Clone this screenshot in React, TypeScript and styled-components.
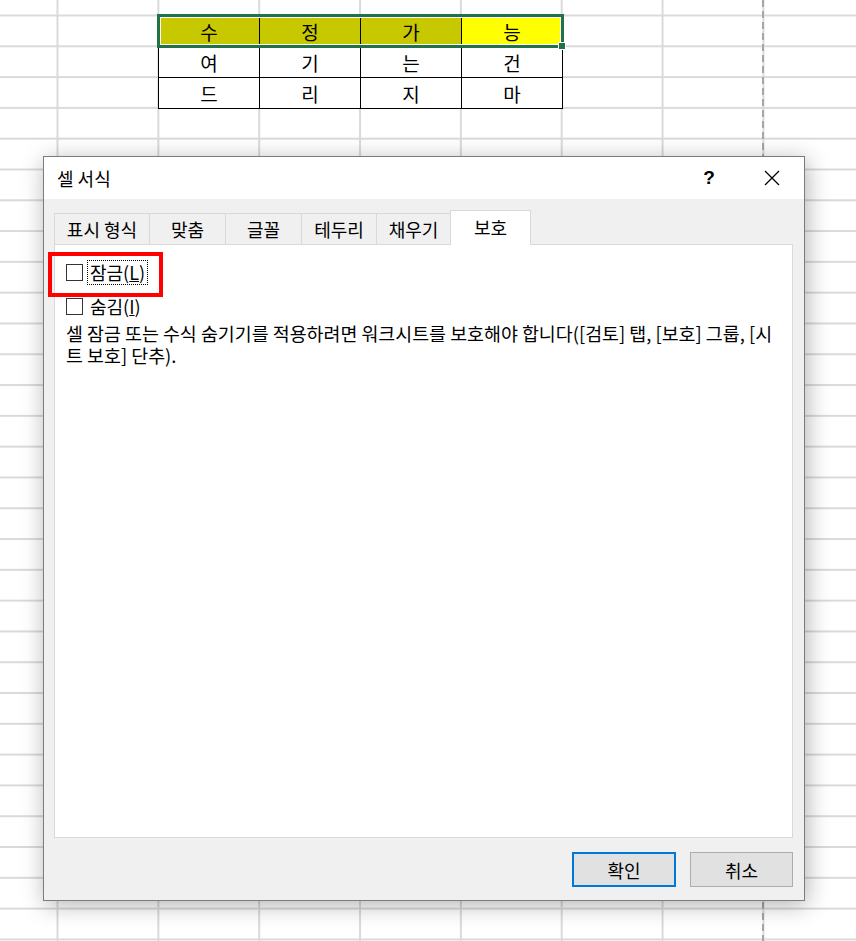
import React from 'react'
import styled, { createGlobalStyle } from 'styled-components'

const GlobalStyle = createGlobalStyle`
    html, body {
        margin: 0;
        padding: 0;
        background: #fff;
        overflow: hidden;
    }
    body {
        font-family: 'Noto Sans CJK KR', 'Noto Sans', sans-serif;
        color: #000;
    }
`

const Sheet = styled.div`
    position: relative;
    width: 856px;
    height: 941px;
    box-sizing: border-box;
    padding: 15px 0 0 158px;
    overflow: hidden;
    background-color: #fff;
    background-image:
        repeating-linear-gradient(to bottom, #a6a6a6 0 7px, transparent 7px 11px),
        linear-gradient(to right, #dadada 0 2px, transparent 2px),
        linear-gradient(to bottom, #dadada 0 2px, transparent 2px);
    background-size: 2px 100%, 100.85px 100%, 100% 30.8px;
    background-position: 762px 0, 56.5px 0, 0 14.5px;
    background-repeat: no-repeat, repeat-x, repeat-y;
`

const TableWrap = styled.div`
    position: relative;
    width: 405px;
`

const CellGrid = styled.div`
    display: grid;
    grid-template-columns: repeat(4, 100px);
    grid-auto-rows: 30px;
    gap: 1px;
    padding: 1px;
    background: #000;
`

const Cell = styled.div<{ $fill?: string }>`
    background: ${p => p.$fill || '#fff'};
    display: flex;
    align-items: center;
    justify-content: center;
    font-size: 19px;
    line-height: 1;
    padding-top: 1px;
`

const Selection = styled.div`
    position: absolute;
    left: -1px;
    top: -1px;
    width: 407px;
    height: 34px;
    box-sizing: border-box;
    border: 3px solid #217346;
    box-shadow: inset 0 0 0 1px #fff;
    pointer-events: none;
`

const Handle = styled.div`
    position: absolute;
    right: -5px;
    bottom: -5px;
    width: 6px;
    height: 6px;
    background: #217346;
    border: 1px solid #fff;
`

const Dialog = styled.div`
    position: absolute;
    left: 43px;
    top: 156px;
    width: 762px;
    height: 745px;
    box-sizing: border-box;
    border: 1px solid #7c7c7c;
    background: #f0f0f0;
    box-shadow: 2px 4px 22px rgba(0, 0, 0, 0.3);
    display: flex;
    flex-direction: column;
`

const TitleBar = styled.div`
    height: 42px;
    background: #fff;
    display: flex;
    align-items: center;
    padding-left: 13px;
`

const Title = styled.div`
    font-size: 18px;
`

const TitleButtons = styled.div`
    margin-left: auto;
    margin-right: 9px;
    display: flex;
    gap: 17px;
`

const TitleButton = styled.div`
    width: 46px;
    height: 30px;
    display: flex;
    align-items: center;
    justify-content: center;
    font-family: 'Liberation Sans', sans-serif;
    font-size: 19px;
    font-weight: bold;
`

const Body = styled.div`
    flex: 1;
    display: flex;
    flex-direction: column;
    padding: 11px 11px 13px 10px;
    min-height: 0;
`

const TabRow = styled.div`
    display: flex;
    align-items: flex-end;
    height: 34px;
    padding-left: 1px;
`

const Tab = styled.div<{ $width: number; $active?: boolean }>`
    width: ${p => p.$width}px;
    height: ${p => (p.$active ? 35 : 31)}px;
    box-sizing: border-box;
    margin-left: -1px;
    margin-bottom: ${p => (p.$active ? -1 : 0)}px;
    border: 1px solid #d9d9d9;
    border-bottom: none;
    background: ${p => (p.$active ? '#fff' : '#f0f0f0')};
    position: relative;
    z-index: ${p => (p.$active ? 1 : 0)};
    display: flex;
    align-items: center;
    justify-content: center;
    font-size: 18px;
    padding-bottom: ${p => (p.$active ? 2 : 0)}px;
`

const Panel = styled.div`
    flex: 1;
    position: relative;
    background: #fff;
    border: 1px solid #d9d9d9;
    padding: 14px 11px;
`

const CheckRow = styled.div`
    display: flex;
    align-items: center;
    height: 26px;
    margin-bottom: 8px;
`

const Box = styled.div`
    width: 17px;
    height: 17px;
    box-sizing: border-box;
    border: 1px solid #333;
    background: #fff;
    margin-right: 4px;
`

const Label = styled.span<{ $focused?: boolean }>`
    font-size: 18px;
    line-height: 23px;
    padding: 0 2px;
    border: 1px dotted ${p => (p.$focused ? '#000' : 'transparent')};
`

const Desc = styled.div`
    font-size: 18.4px;
    line-height: 22px;
    margin-top: -5px;
`

const Highlight = styled.div`
    position: absolute;
    left: -7px;
    top: 7px;
    width: 115px;
    height: 45px;
    box-sizing: border-box;
    border: 4px solid #ff0000;
`

const Footer = styled.div`
    display: flex;
    justify-content: flex-end;
    gap: 14px;
    margin-top: 14px;
`

const Button = styled.div<{ $width: number; $primary?: boolean }>`
    width: ${p => p.$width}px;
    height: 35px;
    box-sizing: border-box;
    background: #e1e1e1;
    border: ${p => (p.$primary ? '2px solid #0078d7' : '1px solid #adadad')};
    display: flex;
    align-items: center;
    justify-content: center;
    font-size: 18px;
`

const rows = [
    ['수', '정', '가', '능'],
    ['여', '기', '는', '건'],
    ['드', '리', '지', '마'],
]

const tabs = [
    { label: '표시 형식', width: 96 },
    { label: '맞춤', width: 77 },
    { label: '글꼴', width: 77 },
    { label: '테두리', width: 76 },
    { label: '채우기', width: 75 },
    { label: '보호', width: 81, active: true },
]

const fillFor = (r: number, c: number) => {
    if (r !== 0) return undefined
    return c === 3 ? '#ffff00' : '#c8c800'
}

export default function App() {
    return (
        <>
            <GlobalStyle />
            <Sheet>
                <TableWrap>
                    <CellGrid>
                        {rows.map((row, r) =>
                            row.map((ch, c) => (
                                <Cell key={`${r}-${c}`} $fill={fillFor(r, c)}>
                                    {ch}
                                </Cell>
                            ))
                        )}
                    </CellGrid>
                    <Selection>
                        <Handle />
                    </Selection>
                </TableWrap>

                <Dialog>
                    <TitleBar>
                        <Title>셀 서식</Title>
                        <TitleButtons>
                            <TitleButton>?</TitleButton>
                            <TitleButton>
                                <svg width="16" height="16" viewBox="0 0 16 16">
                                    <path d="M1 1 L15 15 M15 1 L1 15" stroke="#000" strokeWidth="1.3" fill="none" />
                                </svg>
                            </TitleButton>
                        </TitleButtons>
                    </TitleBar>
                    <Body>
                        <TabRow>
                            {tabs.map(t => (
                                <Tab key={t.label} $width={t.width} $active={t.active}>
                                    {t.label}
                                </Tab>
                            ))}
                        </TabRow>
                        <Panel>
                            <CheckRow>
                                <Box />
                                <Label $focused>
                                    잠금(<u>L</u>)
                                </Label>
                            </CheckRow>
                            <CheckRow>
                                <Box />
                                <Label>
                                    숨김(<u>I</u>)
                                </Label>
                            </CheckRow>
                            <Desc>
                                셀 잠금 또는 수식 숨기기를 적용하려면 워크시트를 보호해야 합니다([검토] 탭, [보호] 그룹, [시트 보호] 단추).
                            </Desc>
                            <Highlight />
                        </Panel>
                        <Footer>
                            <Button $width={104} $primary>확인</Button>
                            <Button $width={103}>취소</Button>
                        </Footer>
                    </Body>
                </Dialog>
            </Sheet>
        </>
    )
}
